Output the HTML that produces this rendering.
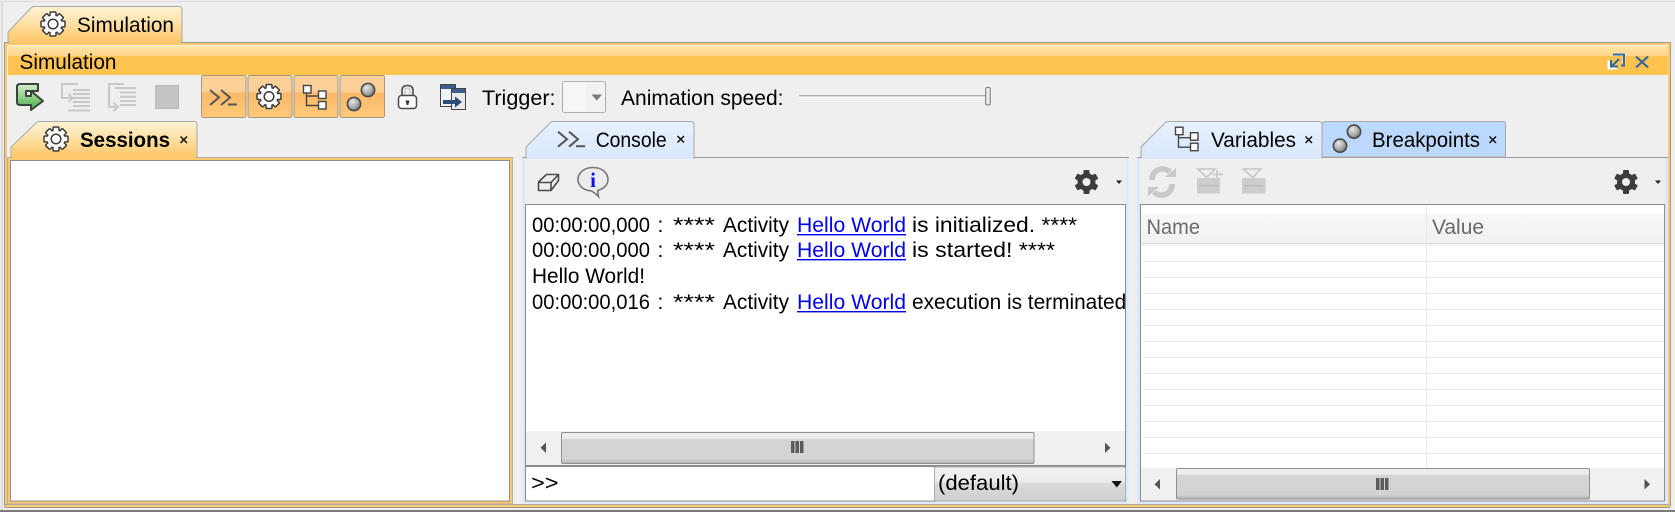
<!DOCTYPE html>
<html><head><meta charset="utf-8"><title>Simulation</title>
<style>
html,body{margin:0;padding:0;background:#efefef;width:1675px;height:512px;overflow:hidden}
svg{display:block}
text{font-family:"Liberation Sans",sans-serif;font-size:21px;fill:#000;white-space:pre}
.l{fill:#0000ee}
.h{fill:#6a6a6a;font-size:21px}
</style></head><body>
<svg width="1675" height="512" viewBox="0 0 1675 512" xmlns="http://www.w3.org/2000/svg">
<defs>
<linearGradient id="yt" x1="0" y1="0" x2="0" y2="1"><stop offset="0" stop-color="#fff3d6"/><stop offset=".45" stop-color="#fee2a8"/><stop offset="1" stop-color="#fdc767"/></linearGradient>
<linearGradient id="bt" x1="0" y1="0" x2="0" y2="1"><stop offset="0" stop-color="#e8f1fe"/><stop offset="1" stop-color="#d9e8fd"/></linearGradient>
<linearGradient id="hd" x1="0" y1="0" x2="0" y2="1"><stop offset="0" stop-color="#ffe6ae"/><stop offset=".36" stop-color="#ffd68a"/><stop offset=".37" stop-color="#ffc34f"/><stop offset="1" stop-color="#ffc34f"/></linearGradient>
<linearGradient id="tg" x1="0" y1="0" x2="0" y2="1"><stop offset="0" stop-color="#fdd19c"/><stop offset=".4" stop-color="#fccf96"/><stop offset=".41" stop-color="#fbb968"/><stop offset="1" stop-color="#ffc97c"/></linearGradient>
<linearGradient id="gr" x1="0" y1="0" x2="0" y2="1"><stop offset="0" stop-color="#d6eccd"/><stop offset=".5" stop-color="#93d08a"/><stop offset="1" stop-color="#45a84a"/></linearGradient>
<linearGradient id="th" x1="0" y1="0" x2="0" y2="1"><stop offset="0" stop-color="#eeeeee"/><stop offset=".2" stop-color="#ebebeb"/><stop offset=".21" stop-color="#d5d5d6"/><stop offset=".85" stop-color="#d3d3d4"/><stop offset="1" stop-color="#b4b4b4"/></linearGradient>
<linearGradient id="cb" x1="0" y1="0" x2="0" y2="1"><stop offset="0" stop-color="#f1f1f1"/><stop offset=".45" stop-color="#ececec"/><stop offset=".46" stop-color="#dbdbdb"/><stop offset="1" stop-color="#cfcfcf"/></linearGradient>
<linearGradient id="tbh" x1="0" y1="0" x2="0" y2="1"><stop offset="0" stop-color="#f7f7f7"/><stop offset="1" stop-color="#f1f1f1"/></linearGradient>
<radialGradient id="ball" cx=".38" cy=".32" r=".75"><stop offset="0" stop-color="#e8e8e8"/><stop offset=".6" stop-color="#a8a8a8"/><stop offset="1" stop-color="#6f6f6f"/></radialGradient>
<g id="gear" stroke="#3a3a3a" stroke-width="1.5" fill="#fff">
<circle r="9"/>
<rect x="-3" y="-12" width="6" height="24" rx="1"/>
<rect x="-3" y="-12" width="6" height="24" rx="1" transform="rotate(45)"/>
<rect x="-3" y="-12" width="6" height="24" rx="1" transform="rotate(90)"/>
<rect x="-3" y="-12" width="6" height="24" rx="1" transform="rotate(135)"/>
<circle r="8.4" stroke="none"/>
<circle r="4.8"/>
</g>
<g id="dgear" fill="#3d3d3d">
<circle r="9"/>
<rect x="-3" y="-12" width="6" height="24" rx="1"/>
<rect x="-3" y="-12" width="6" height="24" rx="1" transform="rotate(60)"/>
<rect x="-3" y="-12" width="6" height="24" rx="1" transform="rotate(120)"/>
<circle r="4" fill="#efefef"/>
</g>
<g id="prompt" fill="none" stroke="#555" stroke-width="2">
<polyline points="210,90 219,97.5 210,105"/>
<polyline points="221,90 230,97.5 221,105"/>
<line x1="228" y1="104.5" x2="237" y2="104.5"/>
</g>
<g id="tree" stroke="#444" stroke-width="1.4" fill="#fff">
<path d="M306.500 93V105.500H318M306.500 96H318" fill="none"/>
<rect x="303.500" y="85.500" width="7.500" height="7.500"/>
<rect x="318.500" y="91" width="7.500" height="7.500"/>
<rect x="318.500" y="101.500" width="7.500" height="7.500"/>
</g>
<g id="balls" stroke="#484848" stroke-width="1.6" fill="url(#ball)">
<circle cx="368" cy="90" r="6.6"/>
<circle cx="354" cy="104" r="6.6"/>
</g>
</defs>

<rect width="1675" height="512" fill="#efefef"/>
<!-- window edges -->
<rect x="0" y="1" width="1675" height="1" fill="#dddddd"/>
<rect x="1" y="1" width="2" height="509" fill="#dcdcdc"/>
<rect x="0" y="510" width="1675" height="2" fill="#7a7a7a"/>

<!-- main frame -->
<rect x="4.500" y="42.500" width="1666" height="464" fill="none" stroke="#9a9a9a"/>
<rect x="5" y="43" width="2" height="463" fill="#fdc96f"/>
<rect x="1668" y="43" width="2" height="463" fill="#fdc96f"/>
<rect x="5" y="43" width="1665" height="2" fill="#fdc96f"/>
<rect x="5" y="505" width="1665" height="2" fill="#fdc96f"/>
<rect x="5" y="504" width="1665" height="1" fill="#a8a8a8"/>
<rect x="5" y="507" width="1665" height="1" fill="#9a9a9a"/>

<!-- top tab -->
<path d="M8 42V33Q8 32 9 31L31 8Q32 6.500 34 6.500H179Q182 6.500 182 9.500V42Z" fill="url(#yt)" stroke="#a8a8a8"/>
<rect x="9" y="41" width="172" height="3" fill="#fdc96f"/>
<use href="#gear" x="53" y="24"/>
<text x="77" y="32" textLength="97" lengthAdjust="spacingAndGlyphs">Simulation</text>

<!-- header -->
<rect x="7" y="45" width="1661" height="30" fill="url(#hd)"/>
<rect x="7" y="45" width="1661" height="1" fill="#fff6e0"/>
<rect x="7" y="45" width="1" height="30" fill="#fff0cc"/>
<text x="19.500" y="69" textLength="97" lengthAdjust="spacingAndGlyphs">Simulation</text>
<!-- restore / close -->
<path d="M1614 54.500H1624V65" fill="none" stroke="#fff" stroke-width="3" opacity=".6"/>
<path d="M1609 60V68H1617" fill="none" stroke="#fff" stroke-width="3"/>
<path d="M1613 54.500H1624V65.500H1621" fill="none" stroke="#34699e" stroke-width="2"/>
<path d="M1619 59L1612 66M1611 60V66.500H1618" fill="none" stroke="#34699e" stroke-width="2"/>
<path d="M1636 56.500L1648 67.500M1648 56.500L1636 67.500" stroke="#34699e" stroke-width="2.200"/>

<!-- run -->
<path d="M20 84H38V91H26V96H31V91L43 101L31 110V105H20Q17 105 17 102V87Q17 84 20 84Z" fill="url(#gr)" stroke="#3a453a" stroke-width="2" stroke-linejoin="round"/>
<!-- disabled step icons -->
<g fill="none" stroke="#c8c8c8" stroke-width="2">
<path d="M78 84H62V98H71"/><path d="M68.500 94L72.500 98L68.500 102"/>
<path d="M73 90H90M73 94H90M73 98H90M73 102H90M73 106H90M68 110.500H90"/>
<path d="M124 84H109V107H116"/><path d="M113.500 103L118 107L113.500 111"/>
<path d="M115 88H136M120 92.500H136M120 96.700H136M120 101H136M120 105H136"/>
</g>
<rect x="155.500" y="85.500" width="23" height="23" fill="#c4c4c4" stroke="#b8b8b8"/>

<!-- toggle buttons -->
<g fill="url(#tg)" stroke="#a89478">
<rect x="201.500" y="75.500" width="44.500" height="42" rx="2"/>
<rect x="248" y="75.500" width="44" height="42" rx="2"/>
<rect x="294" y="75.500" width="44" height="42" rx="2"/>
<rect x="340" y="75.500" width="44.500" height="42" rx="2"/>
</g>
<use href="#prompt"/>
<use href="#gear" x="269" y="96.500"/>
<use href="#tree"/>
<use href="#balls"/>

<!-- lock -->
<path d="M402 96V90.500Q402 85.500 407.500 85.500Q413 85.500 413 90.500V96" fill="none" stroke="#4a4a4a" stroke-width="1.600"/>
<path d="M405 96V91Q405 88 407.500 88Q410 88 410 91V96" fill="none" stroke="#bbb" stroke-width="1"/>
<rect x="398.500" y="95.500" width="18" height="13" rx="3" fill="#fff" stroke="#4a4a4a" stroke-width="1.500"/>
<path d="M405.500 100.500H409.500L408.300 105H406.700Z" fill="#333"/>

<!-- window icon -->
<rect x="440.500" y="84.500" width="15" height="22" fill="#eef2f8" stroke="#444"/>
<rect x="441" y="85" width="14" height="4" fill="#3c5c8e"/>
<rect x="451.500" y="88.500" width="14" height="21" fill="#e8e8e8" stroke="#444"/>
<rect x="452" y="89" width="13" height="4" fill="#3c5c8e"/>
<path d="M443 100H455V96.500L462 102L455 107.500V104H443Z" fill="#2c4c7c"/>

<!-- trigger -->
<text x="482" y="105" textLength="73.500" lengthAdjust="spacingAndGlyphs">Trigger:</text>
<rect x="562.500" y="81.500" width="43" height="31" rx="2" fill="#f2f2f2" stroke="#b0b0b0"/>
<rect x="564" y="83" width="22" height="28" fill="#f6f6f6"/>
<path d="M591.500 94.500H602L596.800 100.500Z" fill="#787878"/>
<text x="621" y="105" textLength="162.500" lengthAdjust="spacingAndGlyphs">Animation speed:</text>

<!-- slider -->
<rect x="799" y="95" width="187" height="1.500" fill="#b0b0b0"/>
<rect x="799" y="96.500" width="187" height="1.500" fill="#fff"/>
<rect x="985.700" y="87.500" width="4.500" height="17.500" rx="1.500" fill="#ececec" stroke="#777"/>

<!-- sessions panel -->
<rect x="7.500" y="157.500" width="505" height="346.500" fill="#fdc96f" stroke="#b4b0a8"/>
<rect x="10.500" y="160.500" width="499" height="340.500" fill="#fff" stroke="#8e8e8e"/>
<path d="M11 157V148Q11 147 12 146L35 124Q37 121.500 39 121.500H194Q197 121.500 197 124.500V157Z" fill="url(#yt)" stroke="#a8a8a8"/>
<rect x="12" y="156" width="184" height="3" fill="#fdc96f"/>
<use href="#gear" x="56" y="139"/>
<text x="80" y="147" textLength="90" lengthAdjust="spacingAndGlyphs" font-weight="700">Sessions</text>
<path d="M180.500 136.500L187 143M187 136.500L180.500 143" stroke="#111" stroke-width="1.500"/>

<!-- console panel -->
<rect x="522.500" y="157.500" width="606" height="346" fill="#dce9fb" stroke="none"/>
<rect x="522" y="157" width="607" height="1" fill="#9a9a9a"/>
<rect x="525" y="158" width="601" height="47" fill="#efefef"/>
<path d="M526 157V148Q526 147 527 146L549 124Q551 121.500 553 121.500H691Q694 121.500 694 124.500V158H526Z" fill="url(#bt)" stroke="#a8a8a8"/>
<rect x="527" y="156" width="166" height="3" fill="#dce9fb"/>
<use href="#prompt" x="348" y="41.700"/>
<text x="595.700" y="147" textLength="71" lengthAdjust="spacingAndGlyphs">Console</text>
<path d="M677.500 136L684 142.500M684 136L677.500 142.500" stroke="#111" stroke-width="1.500"/>

<!-- eraser + info -->
<path d="M538.500 182L546.500 174.500H558.500V180.500L551 190.500H538.500ZM538.500 182.500H551L558.500 174.500M551 182.500V190.500" fill="none" stroke="#4a4a4a" stroke-width="1.600" stroke-linejoin="round"/>
<path d="M593 167.500C584.500 167.500 578 172.500 578 179.500C578 186 584 190.500 591 190.800C593.500 192 596 194 598.500 196.500C598 194 597.700 192 598 190.300C603.500 189 608 185 608 179.500C608 172.500 601.500 167.500 593 167.500Z" fill="#ececec" stroke="#777" stroke-width="1.600"/>
<text x="593" y="187" text-anchor="middle" style="font-family:'Liberation Serif',serif;font-weight:700;font-size:21px;fill:#1010ee">i</text>
<use href="#dgear" x="1086.500" y="182"/>
<path d="M1116 180.500H1122L1119 184Z" fill="#222"/>

<!-- console text box -->
<rect x="525.500" y="204.500" width="600" height="296.500" fill="#fff" stroke="#8c8c8c"/>
<svg x="526" y="205" width="599" height="226" viewBox="526 205 599 226">
<text x="532" y="232" textLength="118" lengthAdjust="spacingAndGlyphs">00:00:00,000</text>
<text x="657.500" y="232">:</text>
<text x="673" y="232" textLength="42" lengthAdjust="spacingAndGlyphs">****</text>
<text x="723" y="232" textLength="66" lengthAdjust="spacingAndGlyphs">Activity</text>
<text x="797" y="232" class="l" textLength="109" lengthAdjust="spacingAndGlyphs">Hello World</text>
<rect x="797" y="234" width="109" height="1.400" fill="#0000ee"/>
<text x="912" y="232" textLength="165" lengthAdjust="spacingAndGlyphs">is initialized. ****</text>

<text x="532" y="257" textLength="118" lengthAdjust="spacingAndGlyphs">00:00:00,000</text>
<text x="657.500" y="257">:</text>
<text x="673" y="257" textLength="42" lengthAdjust="spacingAndGlyphs">****</text>
<text x="723" y="257" textLength="66" lengthAdjust="spacingAndGlyphs">Activity</text>
<text x="797" y="257" class="l" textLength="109" lengthAdjust="spacingAndGlyphs">Hello World</text>
<rect x="797" y="259" width="109" height="1.400" fill="#0000ee"/>
<text x="912" y="257" textLength="143" lengthAdjust="spacingAndGlyphs">is started! ****</text>

<text x="532" y="283" textLength="113" lengthAdjust="spacingAndGlyphs">Hello World!</text>

<text x="532" y="309" textLength="118" lengthAdjust="spacingAndGlyphs">00:00:00,016</text>
<text x="657.500" y="309">:</text>
<text x="673" y="309" textLength="42" lengthAdjust="spacingAndGlyphs">****</text>
<text x="723" y="309" textLength="66" lengthAdjust="spacingAndGlyphs">Activity</text>
<text x="797" y="309" class="l" textLength="109" lengthAdjust="spacingAndGlyphs">Hello World</text>
<rect x="797" y="311" width="109" height="1.400" fill="#0000ee"/>
<text x="912" y="309" textLength="220" lengthAdjust="spacingAndGlyphs">execution is terminated.</text>
</svg>

<!-- console scrollbar -->
<rect x="526" y="431" width="599" height="35" fill="#f0f0f0"/>
<rect x="526" y="465" width="600" height="2" fill="#8c8c8c"/>
<path d="M546 442.500V453L540.500 447.700Z" fill="#555"/>
<path d="M1105 442.500V453L1110.500 447.700Z" fill="#555"/>
<rect x="561.500" y="432.500" width="472.500" height="31" rx="1.500" fill="url(#th)" stroke="#8f8f8f"/>
<g fill="#5c5c5c"><rect x="791" y="441" width="3.500" height="12"/><rect x="795.500" y="441" width="3.500" height="12"/><rect x="800" y="441" width="3.500" height="12"/></g>

<!-- input + combobox -->
<rect x="525.500" y="466.500" width="409" height="34.500" fill="#fff" stroke="#8c8c8c"/>
<text x="531" y="490" textLength="27.500" lengthAdjust="spacingAndGlyphs">&gt;&gt;</text>
<rect x="934.500" y="467" width="191" height="34" rx="2" fill="url(#cb)" stroke="#b0b0b0"/>
<text x="938" y="490" textLength="81" lengthAdjust="spacingAndGlyphs">(default)</text>
<path d="M1111.500 481H1122L1116.800 487.500Z" fill="#111"/>

<!-- right panel -->
<rect x="1137" y="157" width="531" height="347" fill="#dce9fb"/>
<rect x="1137" y="157" width="531" height="1" fill="#9a9a9a"/>
<rect x="1140" y="158" width="525" height="47" fill="#efefef"/>
<path d="M1141 157V148Q1141 147 1142 146L1164 124Q1166 121.500 1168 121.500H1319Q1322 121.500 1322 124.500V158H1141Z" fill="url(#bt)" stroke="#a8a8a8"/>
<rect x="1142" y="156" width="179" height="3" fill="#dce9fb"/>
<path d="M1322 157V125Q1322 121.500 1326 121.500H1503Q1505.500 121.500 1505.500 124.500V157Z" fill="#bcd8fd" stroke="#a8a8a8"/>
<use href="#tree" x="872" y="41.700"/>
<text x="1211" y="147" textLength="85" lengthAdjust="spacingAndGlyphs">Variables</text>
<path d="M1305.500 136.500L1312 143M1312 136.500L1305.500 143" stroke="#111" stroke-width="1.500"/>
<use href="#balls" x="986" y="41.700"/>
<text x="1372" y="147" textLength="108" lengthAdjust="spacingAndGlyphs">Breakpoints</text>
<path d="M1489.500 136.500L1496 143M1496 136.500L1489.500 143" stroke="#111" stroke-width="1.500"/>

<!-- disabled var toolbar -->
<g fill="none" stroke="#c8c8c8" stroke-width="5.500">
<path d="M1152 180A10.500 10.500 0 0 1 1170 172"/>
<path d="M1172 184A10.500 10.500 0 0 1 1154 192"/>
</g>
<path d="M1165 177H1176V168Z" fill="#c8c8c8"/>
<path d="M1159 187H1148V196Z" fill="#c8c8c8"/>
<g>
<path d="M1198 169H1215L1206.500 177.500Z" fill="none" stroke="#cacaca" stroke-width="1.800"/>
<rect x="1197" y="178" width="23" height="15.500" fill="#cdcdcd"/>
<rect x="1199" y="185" width="19" height="1.500" fill="#bcbcbc"/>
<path d="M1217 170V179M1212.500 174.500H1223" stroke="#cacaca" stroke-width="1.800"/>
<path d="M1243.500 169H1261L1252.500 177.500Z" fill="none" stroke="#cacaca" stroke-width="1.800"/>
<rect x="1242" y="178" width="23.500" height="15.500" fill="#cdcdcd"/>
<rect x="1244" y="185" width="19" height="1.500" fill="#bcbcbc"/>
</g>
<use href="#dgear" x="1626" y="182"/>
<path d="M1655 180.500H1661L1658 184Z" fill="#222"/>

<!-- table -->
<rect x="1140.500" y="204.500" width="524" height="296.500" fill="#fff" stroke="#8c8c8c"/>
<rect x="1141" y="214" width="523" height="29" fill="url(#tbh)"/>
<rect x="1141" y="243" width="523" height="1" fill="#d6d6d6"/>
<rect x="1141" y="245" width="523" height="1" fill="#eeeeee"/>
<text class="h" x="1146.500" y="234" textLength="53.500" lengthAdjust="spacingAndGlyphs">Name</text>
<text class="h" x="1432" y="234" textLength="52" lengthAdjust="spacingAndGlyphs">Value</text>
<rect x="1426" y="205" width="1" height="263" fill="#e9e9e9"/>
<g fill="#ececec">
<rect x="1141" y="261" width="523" height="1"/><rect x="1141" y="277" width="523" height="1"/><rect x="1141" y="293" width="523" height="1"/><rect x="1141" y="309" width="523" height="1"/><rect x="1141" y="325" width="523" height="1"/><rect x="1141" y="341" width="523" height="1"/><rect x="1141" y="357" width="523" height="1"/><rect x="1141" y="373" width="523" height="1"/><rect x="1141" y="389" width="523" height="1"/><rect x="1141" y="405" width="523" height="1"/><rect x="1141" y="421" width="523" height="1"/><rect x="1141" y="437" width="523" height="1"/><rect x="1141" y="453" width="523" height="1"/>
</g>
<rect x="1141" y="468" width="523" height="33" fill="#f0f0f0"/>
<path d="M1160 479V489.500L1154.500 484.200Z" fill="#555"/>
<path d="M1644.500 479V489.500L1650 484.200Z" fill="#555"/>
<rect x="1176.500" y="468.500" width="413" height="30.500" rx="1.500" fill="url(#th)" stroke="#8f8f8f"/>
<g fill="#5c5c5c"><rect x="1376" y="478" width="3.500" height="12"/><rect x="1380.500" y="478" width="3.500" height="12"/><rect x="1385" y="478" width="3.500" height="12"/></g>
<rect x="1140.500" y="204.500" width="524" height="296.500" fill="none" stroke="#8c8c8c"/>
</svg>
</body></html>
